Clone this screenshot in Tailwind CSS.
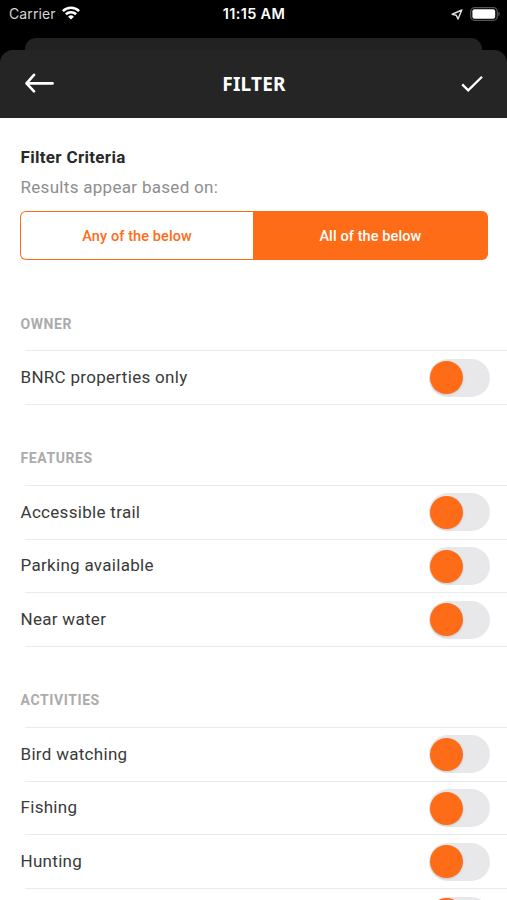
<!DOCTYPE html>
<html lang="en">
<head>
  <meta charset="UTF-8">
  <meta name="viewport" content="width=device-width, initial-scale=1.0">
  <title>Filter</title>
  <script src="https://cdn.jsdelivr.net/npm/@tailwindcss/browser@4"></script>
</head>
<body class="bg-black font-['Roboto',sans-serif] text-[#3a3a3a]">
  <div class="w-full h-[900px] overflow-hidden bg-white">

    <!-- Top area -->
    <div class="bg-black">
      <!-- Status bar -->
      <div class="h-[38px] grid grid-cols-3 items-start pt-1 pl-[9px] pr-[7px] font-['Inter',sans-serif] text-white">
        <div class="flex items-center gap-[6px] h-5">
          <span class="text-[14px] leading-5 tracking-[0.1px] text-[#d6d6d6]">Carrier</span>
          <svg class="w-[18px] h-[14px] -mt-[2px]" viewBox="0 0 18 14" fill="none" stroke="#fff" stroke-width="2.6">
            <path d="M0.9 5.1a11.6 11.6 0 0 1 16.2 0"/>
            <path d="M3.9 8.3a7.3 7.3 0 0 1 10.2 0"/>
            <path d="M9 13.6L6.1 10.7a4.1 4.1 0 0 1 5.8 0z" fill="#fff" stroke="none"/>
          </svg>
        </div>
        <div class="-ml-px text-center text-[14.5px] leading-5 font-semibold tracking-[0.35px] whitespace-nowrap">11:15 AM</div>
        <div class="flex items-center justify-end gap-[7px] h-5">
          <svg class="w-[12px] h-[11px]" viewBox="0 0 12 11" fill="none" stroke="#ddd" stroke-width="1.5" stroke-linejoin="round">
            <path d="M10.8 1L1.2 5.2l4 1 1.8 3.8z"/>
          </svg>
          <svg class="w-[30px] h-[14px] -mt-px" viewBox="0 0 30 14">
            <rect x="0.7" y="0.7" width="26.6" height="12.6" rx="4" fill="none" stroke="#555" stroke-width="1.3"/>
            <rect x="2.4" y="2.3" width="22.8" height="9.4" rx="2" fill="#fff"/>
            <path d="M28.4 4.8q1.4 0.6 1.4 2.2t-1.4 2.2z" fill="#555"/>
          </svg>
        </div>
      </div>

      <!-- Card behind the sheet -->
      <div class="h-3 mx-[25px] rounded-t-[11px] bg-[#222222]"></div>

      <!-- Header -->
      <header class="h-[68px] rounded-t-[13px] bg-[#252525] grid grid-cols-3 items-center pl-[25px] pr-6 text-white">
        <svg class="w-[30px] h-5 -mt-[2px]" viewBox="0 0 30 20" fill="none" stroke="currentColor" stroke-width="2.6" stroke-linecap="round" stroke-linejoin="round">
          <path d="M9 1.8L1.5 10.4 9 18.4M1.6 10.4h26"/>
        </svg>
        <h1 class="text-center font-['Noto_Sans',sans-serif] text-[19px] leading-6 tracking-[0.2px] font-bold">FILTER</h1>
        <svg class="w-[22px] h-[18px] justify-self-end" viewBox="0 0 22 18" fill="none" stroke="currentColor" stroke-width="2.3">
          <path d="M1.2 9.4l6 5.9L21 1.8"/>
        </svg>
      </header>
    </div>

    <!-- Criteria -->
    <section class="h-[151.5px] pt-[27px] pl-[20.5px]">
      <h2 class="text-[17px] leading-6 font-bold tracking-[0.32px] text-[#292929]">Filter Criteria</h2>
      <p class="mt-[6px] text-[17px] leading-6 tracking-[0.3px] text-[#8e8e8e]">Results appear based on:</p>
      <div class="-ml-[0.5px] mt-[12px] h-[49px] w-[467.5px] flex rounded-md bg-[#ff6c17] p-[1.4px] text-[14.5px] tracking-[0.1px] font-medium">
        <button class="flex-1 pt-[3px] rounded-l-[5px] text-[#ff6c17] bg-white">Any of the below</button>
        <button class="flex-1 pt-[3px] pl-[2px] text-white">All of the below</button>
      </div>
    </section>

    <!-- Owner -->
    <section>
      <div class="h-[80.75px] pt-[44px] pl-[20.5px]">
        <h3 class="text-[14px] leading-5 font-bold tracking-[0.6px] text-[#ababab]">OWNER</h3>
      </div>
      <div class="h-[53.75px]">
        <div class="h-px ml-[25px] bg-[#ebebeb]"></div>
        <div class="h-[53px] flex items-center justify-between pl-[20.5px] pr-[17px]">
          <span class="text-[17px] tracking-[0.3px]">BNRC properties only</span>
          <span class="w-[61px] h-[38px] rounded-full bg-[#e8e8ea] pl-px flex items-center"><span class="size-[33px] rounded-full bg-[#ff6c17] shadow-sm"></span></span>
        </div>
      </div>
      <div class="h-px -mb-px ml-[25px] bg-[#ebebeb]"></div>
    </section>

    <!-- Features -->
    <section>
      <div class="h-[80.75px] pt-[44px] pl-[20.5px]">
        <h3 class="text-[14px] leading-5 font-bold tracking-[0.6px] text-[#ababab]">FEATURES</h3>
      </div>
      <div class="h-[53.75px]">
        <div class="h-px ml-[25px] bg-[#ebebeb]"></div>
        <div class="h-[53px] flex items-center justify-between pl-[20.5px] pr-[17px]">
          <span class="text-[17px] tracking-[0.3px]">Accessible trail</span>
          <span class="w-[61px] h-[38px] rounded-full bg-[#e8e8ea] pl-px flex items-center"><span class="size-[33px] rounded-full bg-[#ff6c17] shadow-sm"></span></span>
        </div>
      </div>
      <div class="h-[53.75px]">
        <div class="h-px ml-[25px] bg-[#ebebeb]"></div>
        <div class="h-[53px] flex items-center justify-between pl-[20.5px] pr-[17px]">
          <span class="text-[17px] tracking-[0.3px]">Parking available</span>
          <span class="w-[61px] h-[38px] rounded-full bg-[#e8e8ea] pl-px flex items-center"><span class="size-[33px] rounded-full bg-[#ff6c17] shadow-sm"></span></span>
        </div>
      </div>
      <div class="h-[53.75px]">
        <div class="h-px ml-[25px] bg-[#ebebeb]"></div>
        <div class="h-[53px] flex items-center justify-between pl-[20.5px] pr-[17px]">
          <span class="text-[17px] tracking-[0.3px]">Near water</span>
          <span class="w-[61px] h-[38px] rounded-full bg-[#e8e8ea] pl-px flex items-center"><span class="size-[33px] rounded-full bg-[#ff6c17] shadow-sm"></span></span>
        </div>
      </div>
      <div class="h-px -mb-px ml-[25px] bg-[#ebebeb]"></div>
    </section>

    <!-- Activities -->
    <section>
      <div class="h-[80.75px] pt-[44px] pl-[20.5px]">
        <h3 class="text-[14px] leading-5 font-bold tracking-[0.6px] text-[#ababab]">ACTIVITIES</h3>
      </div>
      <div class="h-[53.75px]">
        <div class="h-px ml-[25px] bg-[#ebebeb]"></div>
        <div class="h-[53px] flex items-center justify-between pl-[20.5px] pr-[17px]">
          <span class="text-[17px] tracking-[0.3px]">Bird watching</span>
          <span class="w-[61px] h-[38px] rounded-full bg-[#e8e8ea] pl-px flex items-center"><span class="size-[33px] rounded-full bg-[#ff6c17] shadow-sm"></span></span>
        </div>
      </div>
      <div class="h-[53.75px]">
        <div class="h-px ml-[25px] bg-[#ebebeb]"></div>
        <div class="h-[53px] flex items-center justify-between pl-[20.5px] pr-[17px]">
          <span class="text-[17px] tracking-[0.3px]">Fishing</span>
          <span class="w-[61px] h-[38px] rounded-full bg-[#e8e8ea] pl-px flex items-center"><span class="size-[33px] rounded-full bg-[#ff6c17] shadow-sm"></span></span>
        </div>
      </div>
      <div class="h-[53.75px]">
        <div class="h-px ml-[25px] bg-[#ebebeb]"></div>
        <div class="h-[53px] flex items-center justify-between pl-[20.5px] pr-[17px]">
          <span class="text-[17px] tracking-[0.3px]">Hunting</span>
          <span class="w-[61px] h-[38px] rounded-full bg-[#e8e8ea] pl-px flex items-center"><span class="size-[33px] rounded-full bg-[#ff6c17] shadow-sm"></span></span>
        </div>
      </div>
      <div class="h-[53.75px]">
        <div class="h-px ml-[25px] bg-[#ebebeb]"></div>
        <div class="h-[53px] flex items-center justify-end pr-[17px]">
          <span class="w-[61px] h-[38px] rounded-full bg-[#e8e8ea] pl-px flex items-center"><span class="size-[33px] -mt-[3px] rounded-full bg-[#ff6c17] shadow-sm"></span></span>
        </div>
      </div>
    </section>
  </div>
</body>
</html>
